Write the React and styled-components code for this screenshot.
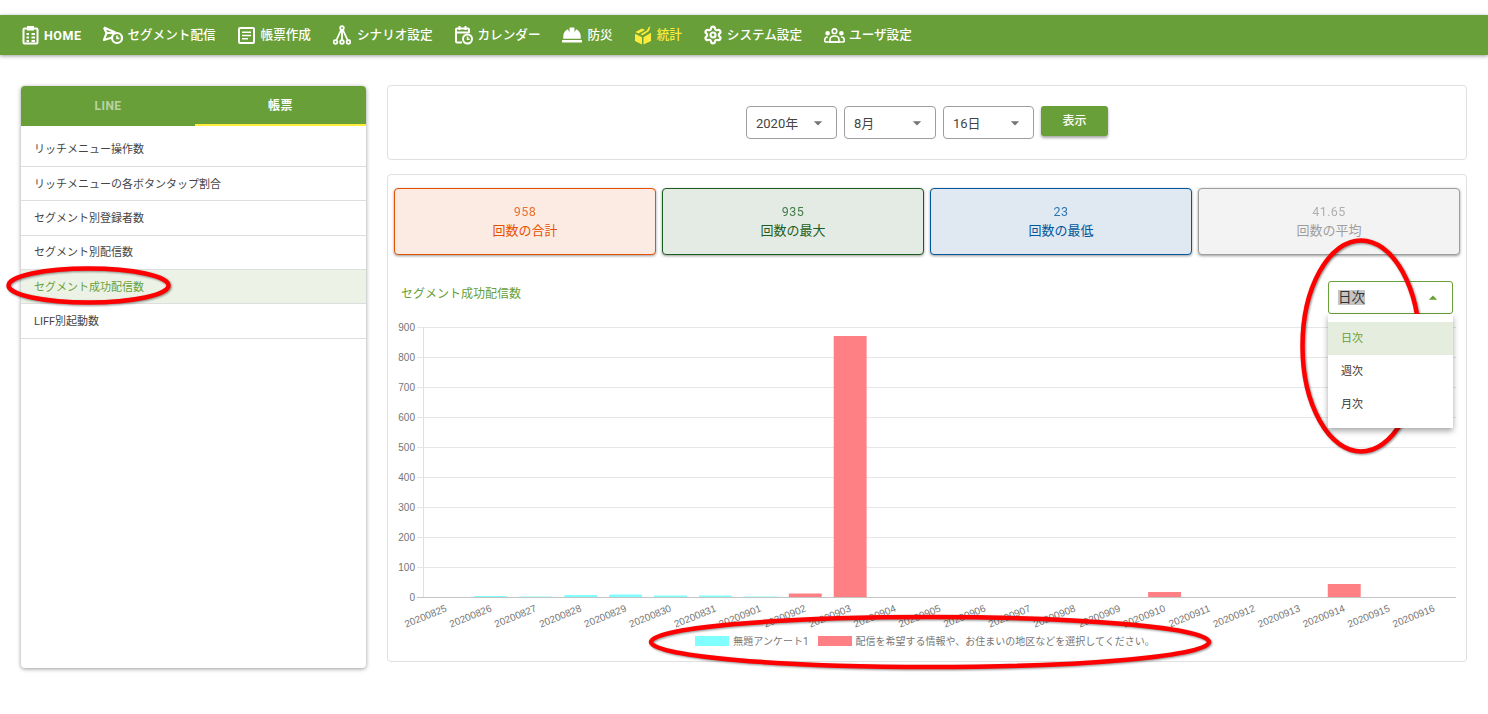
import React from "react";
import styled, { createGlobalStyle } from "styled-components";
import { MdArrowDropDown, MdArrowDropUp } from "react-icons/md";
import { FaHardHat } from "react-icons/fa";
import { Settings } from "lucide-react";

const GREEN = "#689f38";
const FONT = `Roboto, "Noto Sans CJK JP", sans-serif`;

const GlobalStyle = createGlobalStyle`
  html, body { margin: 0; padding: 0; background: #fff; }
  body { font-family: ${FONT}; color: #333; overflow: hidden; }
  * { box-sizing: border-box; }
`;

const Page = styled.div`
  position: relative;
  width: 1488px;
  height: 714px;
  padding-top: 15px;
`;
const NavBar = styled.nav`
  height: 40px;
  background: ${GREEN};
  display: flex;
  align-items: center;
  padding-left: 22px;
  gap: 22px;
  box-shadow: 0 1px 4px rgba(0, 0, 0, 0.4);
`;
const NavItem = styled.a`
  display: flex;
  align-items: center;
  gap: 5px;
  color: ${(p) => (p.$active ? "#ffeb3b" : "#fff")};
  white-space: nowrap;
`;
const IconBox = styled.span`
  flex: none;
  width: ${(p) => p.$w}px;
  height: 24px;
  display: flex;
  align-items: center;
  justify-content: center;
  svg { flex: none; display: block; }
`;
const NavLabel = styled.span`
  font-size: 12.6px;
  font-weight: 500;
  padding-bottom: 4px;
`;
const HomeLabel = styled.span`
  font-size: 12.5px;
  font-weight: 700;
  letter-spacing: 0.5px;
`;
const Content = styled.div`
  display: grid;
  grid-template-columns: 345px 1080px;
  column-gap: 21px;
  padding: 30px 0 0 21px;
`;
const Sidebar = styled.aside`
  height: 582px;
  margin-top: 1px;
  background: #fff;
  border-radius: 4px;
  box-shadow: 0 1px 4px rgba(0, 0, 0, 0.4);
  overflow: hidden;
`;
const Tabs = styled.div`
  display: grid;
  grid-template-columns: 174px 171px;
  height: 40px;
  background: ${GREEN};
`;
const Tab = styled.div`
  display: flex;
  align-items: center;
  justify-content: center;
  font-size: 12px;
  font-weight: 700;
  letter-spacing: 0.4px;
  padding: ${(p) => (p.$active ? "0 0 2px" : "2px 0 0")};
  color: ${(p) => (p.$active ? "#fff" : "rgba(255,255,255,0.55)")};
  border-bottom: 2px solid ${(p) => (p.$active ? "#ffeb3b" : "transparent")};
`;
const Menu = styled.div`
  padding-top: 6.5px;
`;
const MenuItem = styled.div`
  height: 34.4px;
  display: flex;
  align-items: center;
  padding: 0 0 2px 13px;
  font-size: 11px;
  color: ${(p) => (p.$active ? GREEN : "#444")};
  background: ${(p) => (p.$active ? "#ecf3e6" : "#fff")};
  border-bottom: 1px solid #dedede;
`;
const Main = styled.main`
  display: flex;
  flex-direction: column;
  gap: 14px;
`;
const Panel = styled.section`
  border: 1px solid #e0e0e0;
  border-radius: 4px;
  background: #fff;
`;
const FilterPanel = styled(Panel)`
  height: 75px;
  display: flex;
  justify-content: center;
  align-items: flex-start;
  padding-top: 20px;
  gap: 7px;
`;
const Select = styled.div`
  width: ${(p) => p.$width}px;
  height: 33px;
  border: 1px solid #9e9e9e;
  border-radius: 4px;
  display: flex;
  align-items: center;
  justify-content: space-between;
  padding: 0 8px 0 9px;
  font-size: 13px;
  color: #444;
  svg { color: #757575; }
`;
const ShowButton = styled.button`
  width: 67px;
  height: 30px;
  border: 0;
  border-radius: 3px;
  background: ${GREEN};
  color: #fff;
  font: 500 12px ${FONT};
  box-shadow: 0 2px 3px rgba(0, 0, 0, 0.35);
  padding: 0 0 3px;
`;
const ChartPanel = styled(Panel)`
  position: relative;
  height: 488px;
  padding: 13px 6px 0;
`;
const Tiles = styled.div`
  display: grid;
  grid-template-columns: repeat(4, 262px);
  column-gap: 6px;
`;
const Tile = styled.div`
  height: 67px;
  border: 1px solid ${(p) => p.$line};
  border-radius: 4px;
  background: ${(p) => p.$bg};
  color: ${(p) => p.$line};
  box-shadow: 0 1px 3px rgba(0, 0, 0, 0.4);
  display: flex;
  flex-direction: column;
  align-items: center;
  justify-content: center;
  padding-bottom: 1px;
  line-height: 19px;
  font-size: 13px;
`;
const TileValue = styled.div`
  font-size: 12.5px;
  letter-spacing: 0.4px;
  opacity: 0.8;
`;
const ChartHead = styled.div`
  display: flex;
  justify-content: space-between;
  align-items: flex-start;
  height: 72px;
  padding: 26px 7px 0 7px;
`;
const ChartTitle = styled.div`
  font-size: 12px;
  line-height: 24px;
  padding-top: 1px;
  color: ${GREEN};
`;
const Dropdown = styled.div`
  position: relative;
`;
const DropdownField = styled.div`
  width: 125px;
  height: 33px;
  border: 1px solid ${GREEN};
  border-radius: 3px;
  display: flex;
  align-items: center;
  justify-content: space-between;
  padding: 0 9px 0 9px;
  font-size: 13.5px;
  color: #333;
  svg { color: ${GREEN}; }
`;
const Selected = styled.span`
  background: #c4c4c4;
  line-height: 15px;
`;
const DropdownMenu = styled.ul`
  position: absolute;
  z-index: 2;
  top: 33px;
  left: 0;
  width: 125px;
  height: 114px;
  margin: 0;
  padding: 8px 0 0;
  list-style: none;
  background: #fff;
  box-shadow: 0 3px 6px rgba(0, 0, 0, 0.35);
`;
const DropdownOption = styled.li`
  height: 33px;
  display: flex;
  align-items: center;
  padding: 0 0 3px 13px;
  font-size: 11px;
  color: ${(p) => (p.$active ? GREEN : "#333")};
  background: ${(p) => (p.$active ? "#e5eddf" : "#fff")};
`;
const ChartSvg = styled.svg`
  display: block;
  margin-top: -11px;
`;
const Legend = styled.div`
  display: flex;
  justify-content: center;
  align-items: center;
  margin-top: -3px;
  padding-right: 4px;
  font-size: 10px;
  color: #777;
  gap: 4px;
`;
const Swatch = styled.i`
  width: 34px;
  height: 10px;
  background: ${(p) => p.$color};
  margin-left: ${(p) => p.$gap || 0}px;
`;
const Marks = styled.svg`
  position: absolute;
  top: 0;
  left: 0;
  pointer-events: none;
  filter: drop-shadow(1px 1px 1px rgba(0, 0, 0, 0.45));
`;

const ClipboardIcon = () => (
  <svg width="17" height="20" viewBox="0 0 17 20" fill="none" stroke="currentColor" strokeWidth="2">
    <rect x="1.5" y="3.5" width="14" height="15" rx="1" />
    <path d="M5 1h7v4.5H5z" fill="currentColor" stroke="none" />
    <path d="M4.5 9h2.5M4.5 12.5h2.5M4.5 16h2.5M9.5 9h3.5M9.5 12.5h3.5M9.5 16h3.5" />
  </svg>
);
const SendClockIcon = () => (
  <svg width="20" height="20" viewBox="0 0 20 20" fill="none" stroke="currentColor" strokeWidth="2.2">
    <path d="M1 2.5 12.5 7.5M1 2.5l2.5 5.5L1 15l8-2.5" strokeLinejoin="round" />
    <path d="M3.5 8H12" />
    <circle cx="14" cy="13" r="5" fill="#689f38" />
    <path d="M14 10.5v2.9h2.4" strokeWidth="1.6" />
  </svg>
);
const ArticleIcon = () => (
  <svg width="17" height="17" viewBox="0 0 17 17" fill="none" stroke="currentColor" strokeWidth="2">
    <rect x="1" y="1" width="15" height="15" rx="1" />
    <path d="M4 5.2h9M4 8.5h9M4 11.8h6" strokeWidth="1.6" />
  </svg>
);
const TreeIcon = () => (
  <svg width="18" height="20" viewBox="0 0 18 20" fill="none" stroke="currentColor" strokeWidth="1.8">
    <circle cx="9" cy="3" r="1.8" />
    <circle cx="2.5" cy="17" r="1.8" />
    <circle cx="9" cy="17" r="1.8" />
    <circle cx="15.5" cy="17" r="1.8" />
    <path d="M8 5 3.5 15M10 5l4.5 10M9 5v10" />
  </svg>
);
const CalendarClockIcon = () => (
  <svg width="18" height="20" viewBox="0 0 18 20" fill="none" stroke="currentColor" strokeWidth="2">
    <path d="M7 17.5H2a1 1 0 0 1-1-1V4.5a1 1 0 0 1 1-1h11a1 1 0 0 1 1 1V8" />
    <path d="M1.5 7.5H14M4.5 1v4M10.5 1v4" />
    <circle cx="12.5" cy="14" r="4.5" />
    <path d="M12.5 11.6v2.7h2.2" strokeWidth="1.5" />
  </svg>
);
const CubeIcon = () => (
  <svg width="16" height="20" viewBox="0 0 16 20" fill="currentColor">
    <path d="M0.5 7 7 3.5 10 5 3.5 8.5zM5.5 9.2 12 5.5l1.5-3L15.5 1l-1.5 5-6.5 4.2zM0 8.7l7 3.5V19.5L0 16zM8.5 12.2 16 7.8V16l-7.5 3.5z" />
  </svg>
);
const UsersIcon = () => (
  <svg width="21" height="15" viewBox="0 0 21 15" fill="none" stroke="currentColor" strokeWidth="1.6">
    <circle cx="10.5" cy="3.2" r="2.3" />
    <circle cx="3.6" cy="5.2" r="1.5" fill="currentColor" />
    <circle cx="17.4" cy="5.2" r="1.5" fill="currentColor" />
    <path d="M6 14v-2.5C6 9.5 8 8 10.5 8S15 9.5 15 11.5V14z" />
    <path d="M0.8 14v-2.2c0-1.6 1.2-2.8 3-2.8M20.2 14v-2.2c0-1.6-1.2-2.8-3-2.8M0.8 14h19.4" />
  </svg>
);

const navItems = [
  { w: 17, icon: <ClipboardIcon />, label: <HomeLabel>HOME</HomeLabel> },
  { w: 19, icon: <SendClockIcon />, label: <NavLabel>セグメント配信</NavLabel> },
  { w: 18, icon: <ArticleIcon />, label: <NavLabel>帳票作成</NavLabel> },
  { w: 19, icon: <TreeIcon />, label: <NavLabel>シナリオ設定</NavLabel> },
  { w: 18, icon: <CalendarClockIcon />, label: <NavLabel>カレンダー</NavLabel> },
  { w: 20, icon: <FaHardHat size={20} />, label: <NavLabel>防災</NavLabel> },
  { w: 17, icon: <CubeIcon />, label: <NavLabel>統計</NavLabel> },
  { w: 18, icon: <Settings size={20} strokeWidth={2.6} />, label: <NavLabel>システム設定</NavLabel> },
  { w: 20, icon: <UsersIcon />, label: <NavLabel>ユーザ設定</NavLabel> },
];

const menu = [
  "リッチメニュー操作数",
  "リッチメニューの各ボタンタップ割合",
  "セグメント別登録者数",
  "セグメント別配信数",
  "セグメント成功配信数",
  "LIFF別起動数",
];

const tiles = [
  { value: "958", label: "回数の合計", line: "#e65100", bg: "#fcebe2" },
  { value: "935", label: "回数の最大", line: "#1b5e20", bg: "#e4ebe4" },
  { value: "23", label: "回数の最低", line: "#01579b", bg: "#e0e9f2" },
  { value: "41.65", label: "回数の平均", line: "#9e9e9e", bg: "#f3f3f3" },
];

const dates = [
  "20200825", "20200826", "20200827", "20200828", "20200829", "20200830",
  "20200831", "20200901", "20200902", "20200903", "20200904", "20200905",
  "20200906", "20200907", "20200908", "20200909", "20200910", "20200911",
  "20200912", "20200913", "20200914", "20200915", "20200916",
];
const cyanBars = { 1: 1, 2: 0.5, 3: 2, 4: 2.5, 5: 1.5, 6: 1.5, 7: 0.5 };
const redBars = { 8: 3.5, 9: 261, 16: 5, 20: 13 };

// chart drawn in its own coordinates, the plot runs from LEFT to RIGHT
const LEFT = 29;
const RIGHT = 1062;
const TOP = 11;
const BASE = 281;
const STEP = (RIGHT - LEFT) / dates.length;

const BarChart = () => (
  <ChartSvg width="1066" height="320" viewBox="0 0 1066 320" fontFamily='"Liberation Sans", sans-serif' fontSize="10" fill="#757575">
    {[0, 1, 2, 3, 4, 5, 6, 7, 8, 9].map((n) => {
      const y = BASE - n * 30 + 0.5;
      return (
        <g key={n}>
          <line x1={LEFT - 6} x2={RIGHT} y1={y} y2={y} stroke={n === 0 ? "#c4c4c4" : "#e6e6e6"} />
          <text x={LEFT - 8} y={y + 3.5} textAnchor="end">{n * 100}</text>
        </g>
      );
    })}
    <line x1={LEFT + 0.5} x2={LEFT + 0.5} y1={TOP} y2={BASE} stroke="#e0e0e0" />
    {Object.entries(cyanBars).map(([i, h]) => (
      <rect key={i} x={LEFT + i * STEP + 6.5} y={BASE - h} width={STEP - 12} height={h} fill="#80ffff" />
    ))}
    {Object.entries(redBars).map(([i, h]) => (
      <rect key={i} x={LEFT + i * STEP + 6.5} y={BASE - h} width={STEP - 12} height={h} fill="#ff8084" />
    ))}
    {dates.map((d, i) => {
      const x = LEFT + (i + 0.5) * STEP + 2;
      return (
        <text key={d} x={x} y={BASE + 14} textAnchor="end" transform={`rotate(-22 ${x} ${BASE + 14})`}>{d}</text>
      );
    })}
  </ChartSvg>
);

function App() {
  return (
    <Page>
      <GlobalStyle />
      <NavBar>
        {navItems.map((item, i) => (
          <NavItem key={i} $active={i === 6}>
            <IconBox $w={item.w}>{item.icon}</IconBox>
            {item.label}
          </NavItem>
        ))}
      </NavBar>
      <Content>
        <Sidebar>
          <Tabs>
            <Tab>LINE</Tab>
            <Tab $active>帳票</Tab>
          </Tabs>
          <Menu>
            {menu.map((m, i) => (
              <MenuItem key={m} $active={i === 4}>{m}</MenuItem>
            ))}
          </Menu>
        </Sidebar>
        <Main>
          <FilterPanel>
            <Select $width={91}>2020年<MdArrowDropDown size={20} /></Select>
            <Select $width={92}>8月<MdArrowDropDown size={20} /></Select>
            <Select $width={91}>16日<MdArrowDropDown size={20} /></Select>
            <ShowButton>表示</ShowButton>
          </FilterPanel>
          <ChartPanel>
            <Tiles>
              {tiles.map((t) => (
                <Tile key={t.label} $line={t.line} $bg={t.bg}>
                  <TileValue>{t.value}</TileValue>
                  {t.label}
                </Tile>
              ))}
            </Tiles>
            <ChartHead>
              <ChartTitle>セグメント成功配信数</ChartTitle>
              <Dropdown>
                <DropdownField>
                  <Selected>日次</Selected>
                  <MdArrowDropUp size={20} />
                </DropdownField>
                <DropdownMenu>
                  <DropdownOption $active>日次</DropdownOption>
                  <DropdownOption>週次</DropdownOption>
                  <DropdownOption>月次</DropdownOption>
                </DropdownMenu>
              </Dropdown>
            </ChartHead>
            <BarChart />
            <Legend>
              <Swatch $color="#80ffff" />
              無題アンケート1
              <Swatch $color="#ff8084" $gap={5} />
              配信を希望する情報や、お住まいの地区などを選択してください。
            </Legend>
          </ChartPanel>
        </Main>
      </Content>
      <Marks width="1488" height="714" fill="none" stroke="#f00" strokeWidth="4.5">
        <ellipse cx="88.5" cy="285.5" rx="80" ry="17" />
        <ellipse cx="1361" cy="346" rx="58.5" ry="105.5" />
        <ellipse cx="930" cy="642" rx="279" ry="25" />
      </Marks>
    </Page>
  );
}

export default App;
